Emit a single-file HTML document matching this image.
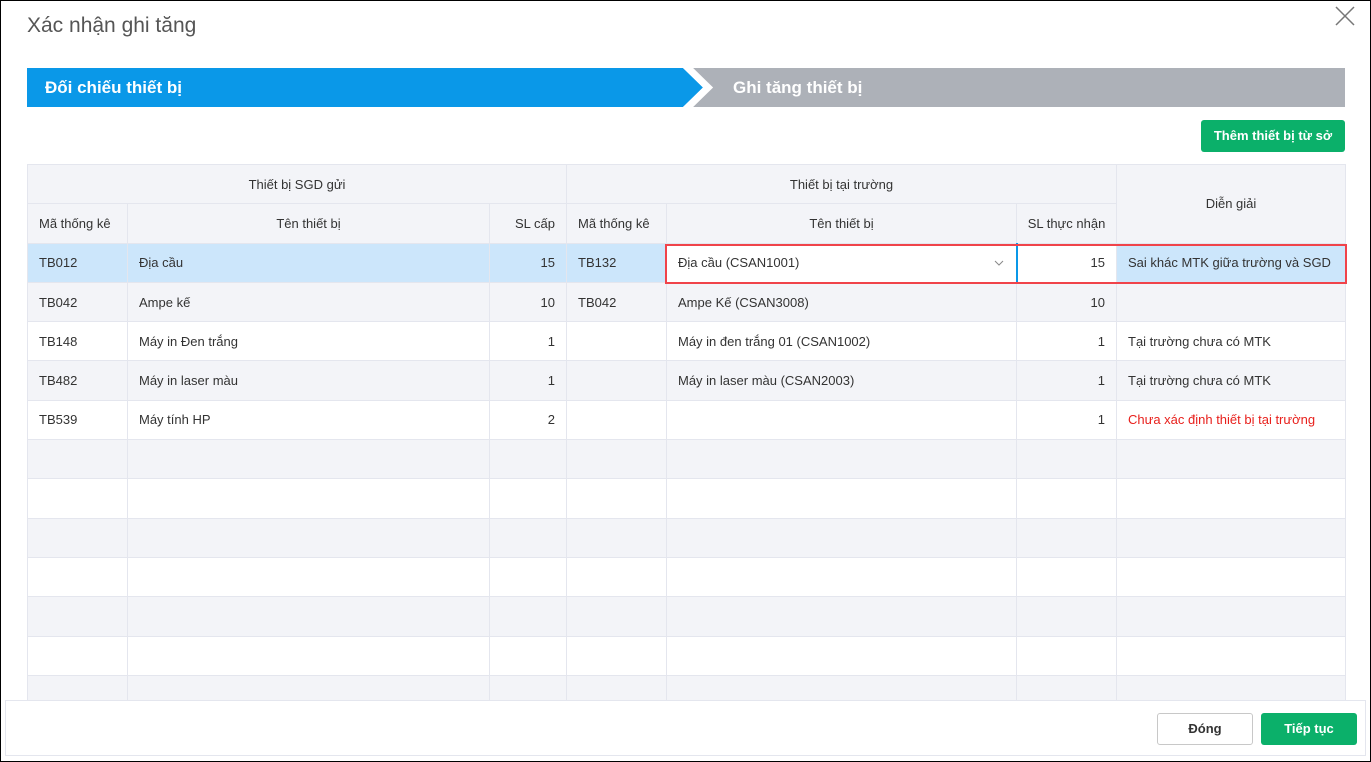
<!DOCTYPE html>
<html><head><meta charset="utf-8"><style>
*{box-sizing:border-box;margin:0;padding:0}
body{width:1371px;height:762px;overflow:hidden;background:#fff;font-family:"Liberation Sans","DejaVu Sans",sans-serif;color:#333;position:relative}
.frame{position:absolute;left:0;top:0;width:1371px;height:762px;border:1px solid #000;pointer-events:none;z-index:9}
.title{position:absolute;left:27px;top:14px;font-size:21px;color:#555}
.close{position:absolute;left:1332px;top:3px}
.step{position:absolute;top:68px;height:39px;white-space:nowrap;width:400px}
.step span{position:absolute;top:10px;font-size:17px;font-weight:bold;color:#fff}
.btn{position:absolute;border-radius:3px;font-size:13px;font-weight:bold;text-align:center}
table{position:absolute;left:27px;top:164px;border-collapse:collapse;font-size:13px;table-layout:fixed}
td,th{border:1px solid #e4e6ee;height:39.3px;padding:0 11px;white-space:nowrap;overflow:hidden}
th{background:#f3f4f8;font-weight:normal;color:#333;text-align:center}
tr.g td{background:#f3f4f8}
tr.s td{background:#cce6fb}
.r{text-align:right}
.red{color:#e8201c}
.footer{position:absolute;left:5px;top:700px;width:1361px;height:56px;border:1px solid #e4e6ee;background:#fff}
</style></head><body>
<div class="frame"></div>
<div class="title">Xác nhận ghi tăng</div>
<svg class="close" width="26" height="26" viewBox="0 0 26 26"><path d="M4 4L22 22M22 4L4 22" stroke="#777" stroke-width="1.5"/></svg>
<svg style="position:absolute;left:27px;top:68px" width="1318" height="39">
<polygon points="666,0 1318,0 1318,39 666,39 686,19.5" fill="#adb1b8"/>
<polygon points="0,0 656,0 676,19.5 656,39 0,39" fill="#0a98e8"/>
<polygon points="656,0 666,0 686,19.5 666,39 656,39 676,19.5" fill="#fff"/>
</svg>
<div class="step" style="left:45px"><span>Đối chiếu thiết bị</span></div>
<div class="step" style="left:733px"><span>Ghi tăng thiết bị</span></div>
<div class="btn" style="left:1201px;top:120px;width:144px;height:32px;line-height:32px;background:#0bb06a;color:#fff">Thêm thiết bị từ sở</div>
<table>
<colgroup><col style="width:100px"><col style="width:362px"><col style="width:77px"><col style="width:100px"><col style="width:350px"><col style="width:100px"><col style="width:229px"></colgroup>
<tr><th colspan="3" style="font-weight:500">Thiết bị SGD gửi</th><th colspan="3">Thiết bị tại trường</th><th rowspan="2">Diễn giải</th></tr>
<tr><th style="text-align:left">Mã thống kê</th><th>Tên thiết bị</th><th class="r">SL cấp</th><th style="text-align:left">Mã thống kê</th><th>Tên thiết bị</th><th style="padding:0 8px">SL thực nhận</th></tr>
<tr class="s"><td>TB012</td><td>Địa cầu</td><td class="r">15</td><td>TB132</td><td style="background:#fff;position:relative">Địa cầu (CSAN1001)<svg style="position:absolute;right:12px;top:16px" width="10" height="6"><path d="M1 1L5 5L9 1" stroke="#888" fill="none"/></svg></td><td class="r" style="background:#fff;border-left:2px solid #0a98e8">15</td><td>Sai khác MTK giữa trường và SGD</td></tr>
<tr class="g"><td>TB042</td><td>Ampe kế</td><td class="r">10</td><td>TB042</td><td>Ampe Kế (CSAN3008)</td><td class="r">10</td><td></td></tr>
<tr><td>TB148</td><td>Máy in Đen trắng</td><td class="r">1</td><td></td><td>Máy in đen trắng 01 (CSAN1002)</td><td class="r">1</td><td>Tại trường chưa có MTK</td></tr>
<tr class="g"><td>TB482</td><td>Máy in laser màu</td><td class="r">1</td><td></td><td>Máy in laser màu (CSAN2003)</td><td class="r">1</td><td>Tại trường chưa có MTK</td></tr>
<tr><td>TB539</td><td>Máy tính HP</td><td class="r">2</td><td></td><td></td><td class="r">1</td><td class="red">Chưa xác định thiết bị tại trường</td></tr>
<tr class="g"><td></td><td></td><td></td><td></td><td></td><td></td><td></td></tr>
<tr><td></td><td></td><td></td><td></td><td></td><td></td><td></td></tr>
<tr class="g"><td></td><td></td><td></td><td></td><td></td><td></td><td></td></tr>
<tr><td></td><td></td><td></td><td></td><td></td><td></td><td></td></tr>
<tr class="g"><td></td><td></td><td></td><td></td><td></td><td></td><td></td></tr>
<tr><td></td><td></td><td></td><td></td><td></td><td></td><td></td></tr>
<tr class="g"><td></td><td></td><td></td><td></td><td></td><td></td><td></td></tr>
</table>
<div style="position:absolute;left:665px;top:244px;width:682px;height:40px;border:2px solid #f0434a"></div>
<div class="footer"></div>
<div class="btn" style="left:1157px;top:713px;width:96px;height:32px;line-height:30px;border:1px solid #c8c8c8;color:#333;background:#fff">Đóng</div>
<div class="btn" style="left:1261px;top:713px;width:96px;height:32px;line-height:32px;background:#0bb06a;color:#fff">Tiếp tục</div>
</body></html>
